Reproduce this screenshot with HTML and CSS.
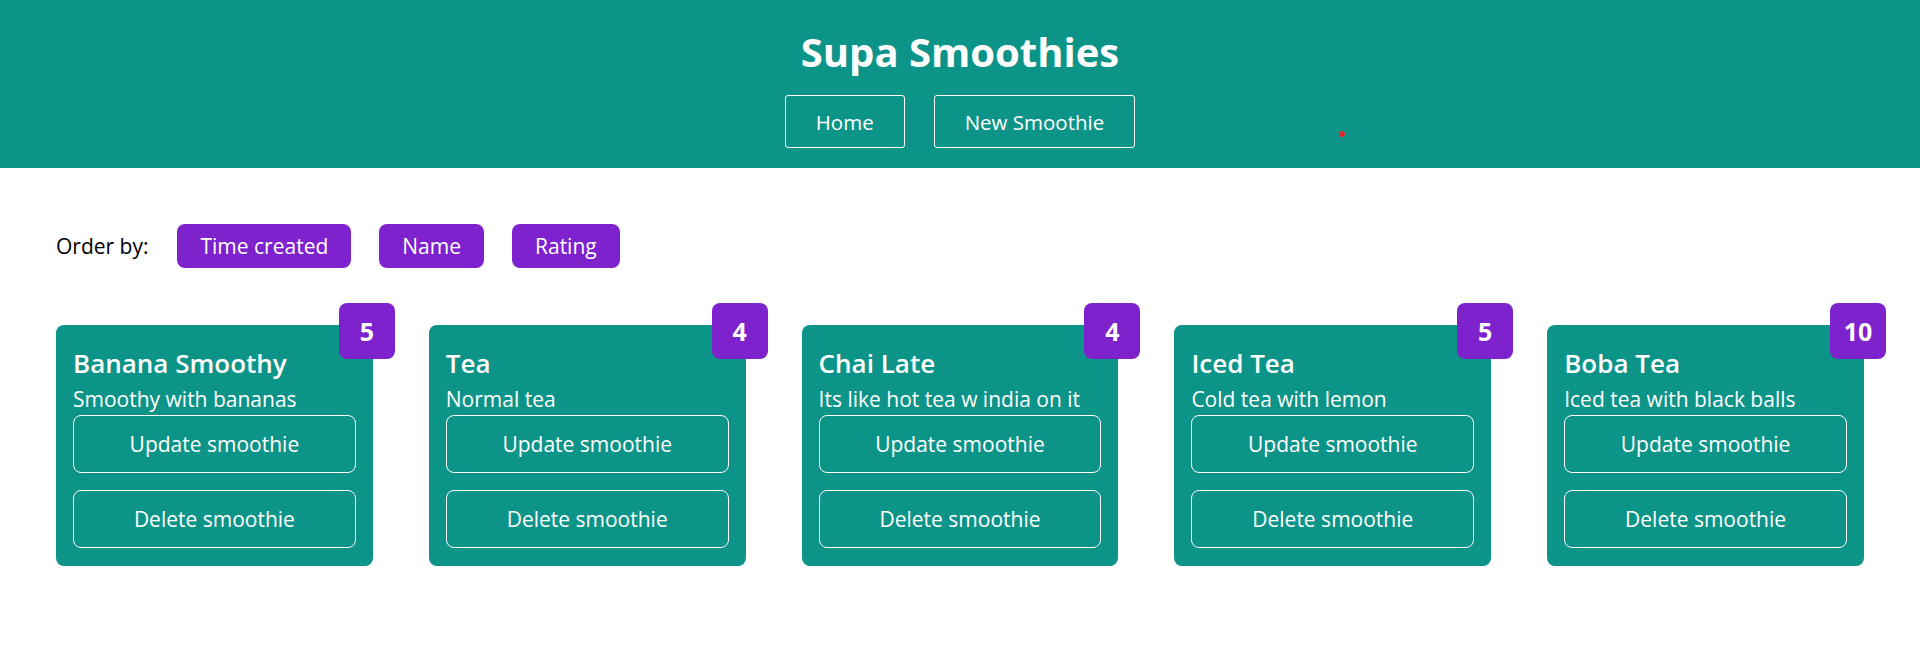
FILE: index.html
```html
<!DOCTYPE html>
<html lang="en">
<head>
<meta charset="utf-8">
<title>Supa Smoothies</title>
<link rel="stylesheet" href="styles.css">
</head>
<body>
<header class="header">
  <h1 class="title">Supa Smoothies</h1>
  <nav class="nav">
    <a class="nav-link" href="#">Home</a>
    <a class="nav-link" href="#">New Smoothie</a>
  </nav>
  <span class="dot"></span>
</header>
<main class="content">
  <div class="order-row">
    <span class="order-label">Order by:</span>
    <button class="sort-btn">Time created</button>
    <button class="sort-btn">Name</button>
    <button class="sort-btn">Rating</button>
  </div>
  <div class="cards">
    <div class="card">
      <h2 class="card-title">Banana Smoothy</h2>
      <p class="card-desc">Smoothy with bananas</p>
      <div class="card-actions">
        <button class="card-btn">Update smoothie</button>
        <button class="card-btn">Delete smoothie</button>
      </div>
      <div class="rating">5</div>
    </div>
    <div class="card">
      <h2 class="card-title">Tea</h2>
      <p class="card-desc">Normal tea</p>
      <div class="card-actions">
        <button class="card-btn">Update smoothie</button>
        <button class="card-btn">Delete smoothie</button>
      </div>
      <div class="rating">4</div>
    </div>
    <div class="card">
      <h2 class="card-title">Chai Late</h2>
      <p class="card-desc">Its like hot tea w india on it</p>
      <div class="card-actions">
        <button class="card-btn">Update smoothie</button>
        <button class="card-btn">Delete smoothie</button>
      </div>
      <div class="rating">4</div>
    </div>
    <div class="card">
      <h2 class="card-title">Iced Tea</h2>
      <p class="card-desc">Cold tea with lemon</p>
      <div class="card-actions">
        <button class="card-btn">Update smoothie</button>
        <button class="card-btn">Delete smoothie</button>
      </div>
      <div class="rating">5</div>
    </div>
    <div class="card">
      <h2 class="card-title">Boba Tea</h2>
      <p class="card-desc">Iced tea with black balls</p>
      <div class="card-actions">
        <button class="card-btn">Update smoothie</button>
        <button class="card-btn">Delete smoothie</button>
      </div>
      <div class="rating">10</div>
    </div>
  </div>
</main>
</body>
</html>
```
FILE: styles.css
```css
* { box-sizing: border-box; }

body {
  margin: 0;
  font-family: "Open Sans", "Noto Sans", sans-serif;
  color: #000;
  background: #fff;
}

.header {
  position: relative;
  background: #0d9488;
  padding: 28px 0 20px;
  display: flex;
  flex-direction: column;
  align-items: center;
}

.title {
  margin: 0;
  font-size: 40px;
  line-height: 48px;
  font-weight: 700;
  color: #fff;
}

.nav {
  display: flex;
  gap: 29px;
  margin-top: 19px;
}

.nav-link {
  display: flex;
  align-items: center;
  height: 53px;
  padding: 0 30px;
  border: 1px solid #fff;
  border-radius: 3px;
  color: #fff;
  text-decoration: none;
  font-size: 20.5px;
}

.dot {
  position: absolute;
  left: 1339px;
  top: 131px;
  width: 6px;
  height: 6px;
  border-radius: 50%;
  background: #e3262b;
}

.content {
  padding: 56px;
}

.order-row {
  display: flex;
  align-items: center;
  height: 44px;
}

.order-label {
  font-size: 21px;
  margin-right: 29px;
}

.sort-btn {
  height: 44px;
  padding: 0 23px;
  margin-right: 28px;
  border: none;
  border-radius: 8px;
  background: #7e22ce;
  color: #fff;
  font-family: inherit;
  font-size: 21px;
}

.cards {
  display: grid;
  grid-template-columns: repeat(5, 1fr);
  gap: 56px;
  margin-top: 57px;
}

.card {
  position: relative;
  background: #0d9488;
  border-radius: 8px;
  padding: 21px 17px 18px;
  color: #fff;
}

.card-title {
  margin: 0 0 5px;
  font-size: 26px;
  line-height: 34px;
  font-weight: 600;
}

.card-desc {
  margin: 0;
  font-size: 21px;
  line-height: 28px;
}

.card-actions {
  display: flex;
  flex-direction: column;
  gap: 17px;
  margin-top: 2px;
}

.card-btn {
  height: 58px;
  border: 1px solid #fff;
  border-radius: 8px;
  background: transparent;
  color: #fff;
  font-family: inherit;
  font-size: 21px;
}

.rating {
  position: absolute;
  top: -22px;
  right: -22px;
  width: 56px;
  height: 56px;
  display: flex;
  align-items: center;
  justify-content: center;
  border-radius: 8px;
  background: #7e22ce;
  color: #fff;
  font-size: 25px;
  font-weight: 700;
}
```
